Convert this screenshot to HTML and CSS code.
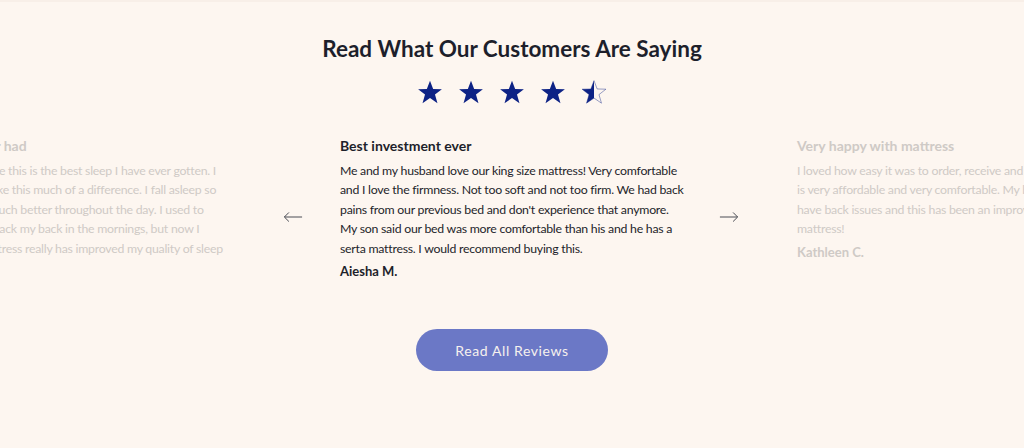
FILE: index.html
```html
<!DOCTYPE html>
<html>
<head>
  <title>Reviews</title>
  <link rel="stylesheet" href="styles.css">
</head>
<body>
  <section class="reviews">
    <h2 class="reviews-title">Read What Our Customers Are Saying</h2>

    <div class="stars">
      <svg class="star" viewBox="0 0 24 24"><polygon points="12,1.5 14.9,9.2 23,9.4 16.6,14.4 18.9,22.3 12,17.6 5.1,22.3 7.4,14.4 1,9.4 9.1,9.2"/></svg>
      <svg class="star" viewBox="0 0 24 24"><polygon points="12,1.5 14.9,9.2 23,9.4 16.6,14.4 18.9,22.3 12,17.6 5.1,22.3 7.4,14.4 1,9.4 9.1,9.2"/></svg>
      <svg class="star" viewBox="0 0 24 24"><polygon points="12,1.5 14.9,9.2 23,9.4 16.6,14.4 18.9,22.3 12,17.6 5.1,22.3 7.4,14.4 1,9.4 9.1,9.2"/></svg>
      <svg class="star" viewBox="0 0 24 24"><polygon points="12,1.5 14.9,9.2 23,9.4 16.6,14.4 18.9,22.3 12,17.6 5.1,22.3 7.4,14.4 1,9.4 9.1,9.2"/></svg>
      <svg class="star star-half" viewBox="0 0 24 24">
        <defs>
          <linearGradient id="half">
            <stop offset="50%" stop-color="#0d2285"/>
            <stop offset="50%" stop-color="#fdf6f0"/>
          </linearGradient>
        </defs>
        <polygon points="12,1.5 14.9,9.2 23,9.4 16.6,14.4 18.9,22.3 12,17.6 5.1,22.3 7.4,14.4 1,9.4 9.1,9.2"/>
      </svg>
    </div>

    <div class="carousel">
      <div class="slide slide-faded">
        <h3 class="slide-title">Best sleep I've ever had</h3>
        <p class="slide-text slide-text-lines">Honestly, I really believe this is the best sleep I have ever gotten. I<br>Who knew it could make this much of a difference. I fall asleep so<br>much faster and feel much better throughout the day. I used to<br>I would wake up and crack my back in the mornings, but now I<br>don't have to. This mattress really has improved my quality of sleep</p>
      </div>

      <button class="arrow arrow-prev" aria-label="Previous">
        <svg viewBox="0 0 22 12"><path d="M21 6H1.5M6.5 1L1.5 6l5 5"/></svg>
      </button>

      <div class="slide">
        <h3 class="slide-title">Best investment ever</h3>
        <p class="slide-text">Me and my husband love our king size mattress! Very comfortable and I love the firmness. Not too soft and not too firm. We had back pains from our previous bed and don't experience that anymore. My son said our bed was more comfortable than his and he has a serta mattress. I would recommend buying this.</p>
        <p class="slide-author">Aiesha M.</p>
      </div>

      <button class="arrow arrow-next" aria-label="Next">
        <svg viewBox="0 0 22 12"><path d="M1 6h19.5M15.5 1l5 5-5 5"/></svg>
      </button>

      <div class="slide slide-faded">
        <h3 class="slide-title">Very happy with mattress</h3>
        <p class="slide-text slide-text-lines">I loved how easy it was to order, receive and set up. This mattress<br>is very affordable and very comfortable. My boyfriend and I both<br>have back issues and this has been an improvement from our old<br>mattress!</p>
        <p class="slide-author">Kathleen C.</p>
      </div>
    </div>

    <a class="reviews-button" href="#">Read All Reviews</a>
  </section>
</body>
</html>
```

FILE: styles.css
```css
body {
  margin: 0;
  background-color: #fdf6f0;
  font-family: Lato, "Noto Sans", sans-serif;
  color: #1d1f2b;
  overflow: hidden;
}
.reviews {
  border-top: 2px solid #f8efe8;
  padding-top: 33px;
  display: flex;
  flex-direction: column;
  align-items: center;
}
.reviews-title {
  margin: 0;
  font-size: 22.5px;
  font-weight: 700;
}
.stars {
  display: flex;
  gap: 15px;
  margin-top: 17px;
}
.star {
  width: 26px;
  height: 26px;
  fill: #0d2285;
}
.star-half {
  fill: url(#half);
  stroke: #0d2285;
  stroke-width: 0.4;
}
.carousel {
  display: flex;
  align-items: center;
  justify-content: center;
  margin-top: 32px;
  width: 100%;
}
.slide {
  flex: 0 0 346px;
  width: 346px;
  align-self: flex-start;
}
.slide-faded {
  color: #cfcac6;
}
.slide-title {
  margin: 0 0 7px;
  font-size: 14px;
  font-weight: 700;
}
.slide-text {
  margin: 0;
  font-size: 12.3px;
  letter-spacing: -0.25px;
  line-height: 19.4px;
}
.slide-text-lines {
  white-space: nowrap;
}
.slide-author {
  margin: 5px 0 0;
  font-size: 13px;
  font-weight: 700;
}
.arrow {
  flex: 0 0 20px;
  width: 20px;
  height: 12px;
  padding: 0;
  border: none;
  background: none;
  cursor: pointer;
}
.arrow-prev {
  margin: 18px 37px 0 56px;
}
.arrow-next {
  margin: 18px 58px 0 33px;
}
.arrow svg {
  display: block;
  width: 20px;
  height: 12px;
  fill: none;
  stroke: #4a4c54;
  stroke-width: 1.1;
}
.reviews-button {
  margin-top: 50px;
  width: 192px;
  height: 42px;
  border-radius: 21px;
  background-color: #6b78c6;
  color: #f6f1ee;
  font-size: 14px;
  letter-spacing: 0.6px;
  text-decoration: none;
  display: flex;
  align-items: center;
  justify-content: center;
}
```
